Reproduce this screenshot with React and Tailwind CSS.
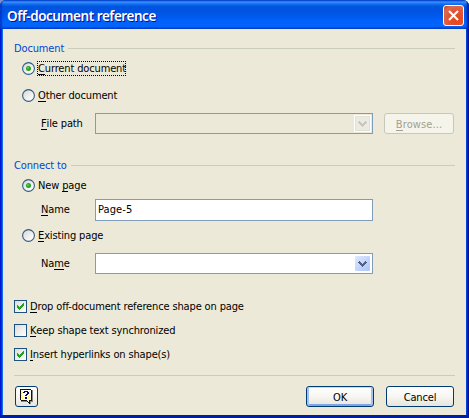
import React from "react";

function Section({ label, top }) {
  return (
    <div className={`flex h-[14px] items-center ${top}`}>
      <span className="mr-[4px] pt-px leading-[14px] text-[#0046d5]">{label}</span>
      <span className="h-px flex-1 bg-[#cacdb8]" />
    </div>
  );
}

function Key({ children }) {
  return <span className="inline-block h-[13px] border-b border-current leading-[14px]">{children}</span>;
}

function Text({ className = "", children }) {
  return <span className={`block pt-[2px] whitespace-nowrap ${className}`}>{children}</span>;
}

function Radio({ checked }) {
  return (
    <svg width="13" height="13" viewBox="0 0 13 13" className="shrink-0">
      <defs>
        <linearGradient id="radioFill" x1="0" y1="0" x2="1" y2="1">
          <stop offset="0.15" stopColor="#dcdcd7" />
          <stop offset="0.85" stopColor="#fff" />
        </linearGradient>
      </defs>
      <circle cx="6.5" cy="6.5" r="5.9" fill="url(#radioFill)" stroke="#2f5a88" strokeWidth="1.1" />
      {checked && <circle cx="6.5" cy="6.5" r="2.5" fill="#28a428" />}
      {checked && <circle cx="6" cy="6" r="1" fill="#55d551" />}
    </svg>
  );
}

function Check({ checked }) {
  return (
    <span className="flex size-[13px] shrink-0 border border-[#1c5180] bg-linear-to-br from-[#dcdcd7] to-white">
      {checked && (
        <svg width="11" height="11" shapeRendering="crispEdges">
          <path d="M2 4h1v1h1v1h1v-1h1v-1h1v-1h1v-1h1v3h-1v1h-1v1h-1v1h-1v1h-1v-1h-1v-1h-1z" fill="#21a121" />
        </svg>
      )}
    </span>
  );
}

function Arrow({ disabled }) {
  return (
    <span
      className={
        disabled
          ? "flex h-[17px] w-[17px] border border-white bg-[#ebeae3] outline-1 -outline-offset-2 outline-[#e2e1d8]"
          : "flex h-[17px] w-[17px] rounded-[2px] border border-white bg-linear-to-br from-[#dfe9ff] via-[#c5d5fc] to-[#afc6f8]"
      }
    >
      <svg width="15" height="15" shapeRendering="crispEdges">
        <path
          d="M4 5h1v1h-1zM10 5h1v1h-1zM3 6h3v1h-3zM9 6h3v1h-3zM4 7h3v1h-3zM8 7h3v1h-3zM5 8h5v1h-5zM6 9h3v1h-3zM7 10h1v1h-1z"
          fill={disabled ? "#c7c6bd" : "#4d6185"}
        />
      </svg>
    </span>
  );
}

function HelpIcon() {
  return (
    <svg width="15" height="17" viewBox="0 0 15 17" shapeRendering="crispEdges">
      <path d="M2 2h12v12h-2v2h-1v-1h-1v-1h-8z" fill="#8a8a80" />
      <path d="M1 1h11v1h1v11h-2v3h-1v-1h-1v-1h-1v-1h-6v-1h-1z" fill="#111" />
      <path d="M2 2h10v10h-2v2h-1v-1h-1v-1h-6z" fill="#fffff4" />
      <path d="M2 3h1v1h-1zM2 5h1v1h-1zM2 7h1v1h-1zM2 9h1v1h-1zM3 4h1v1h-1zM3 8h1v1h-1zM3 10h1v1h-1zM10 3h1v1h-1zM10 5h1v1h-1zM10 7h1v1h-1zM10 9h1v1h-1zM9 8h1v1h-1zM9 10h1v1h-1z" fill="#fff26b" />
      <path d="M5 3h4v1h-4zM4 4h2v1h-2zM8 4h2v2h-2zM7 6h2v1h-2zM6 7h2v1h-2zM6 9h2v2h-2z" fill="#000083" />
    </svg>
  );
}

const buttonBase =
  "flex h-[21px] items-center justify-center rounded-[3px] border leading-[19px]";
const activeButton =
  "border-[#003c74] bg-linear-to-b from-white via-[#f7f6f2] to-[#e7e5dc]";

export default function App() {
  return (
    <div className="h-[418px] w-[469px] overflow-hidden bg-[linear-gradient(90deg,#7890c8_0_50%,#fff_50%)]">
      <div className="flex h-full w-full flex-col overflow-hidden rounded-t-[6px] bg-[#0831d9] font-['DejaVu_Sans_Condensed','DejaVu_Sans',sans-serif] text-[11px] tracking-[-0.14px] text-black">
        <header className="flex h-[29px] shrink-0 items-center justify-between bg-[linear-gradient(180deg,#0855dd_0,#3e94ff_7%,#1777f5_12%,#0055df_22%,#0054e3_45%,#0061fa_72%,#0066ff_90%,#0047c9_100%)] pr-[5px] pl-[7px] shadow-[inset_2px_0_2px_#0039c9,inset_-2px_0_2px_#001da0]">
          <h1 className="pt-[2px] font-['Noto_Sans',sans-serif] text-[13.5px] leading-[18px] font-semibold tracking-[-0.45px] whitespace-nowrap text-white [text-shadow:1px_1px_0_#0f1089]">
            Off-document reference
          </h1>
          <button aria-label="Close" className="mt-[2px] flex size-[21px] items-center justify-center rounded-[3px] border border-white bg-[radial-gradient(circle_at_65%_70%,#e54517,#e25332_45%,#dc6b50_75%,#bd3b19)]">
            <svg width="13" height="13" viewBox="0 0 13 13">
              <path d="M2 2l9 9M11 2l-9 9" stroke="white" strokeWidth="2.1" />
            </svg>
          </button>
        </header>
        <div className="flex flex-1 border-b-[3px] border-b-[#001ea0]">
          <div className="flex w-[3px] shrink-0"><i className="w-px bg-[#0019cf]" /><i className="w-px bg-[#0831d9]" /><i className="w-px bg-[#166aee]" /></div>
          <main className="min-w-0 flex-1 bg-[#ece9d8] pr-[11px] pl-[11px]">
            <Section label="Document" top="mt-[12px]" />
            <div className="mt-[6px] ml-[8px] flex h-[15px] items-center">
              <Radio checked />
              <span className="ml-[2px] flex h-[15px] w-[89px] items-center border border-dotted border-black">
                <Text><Key>C</Key>urrent document</Text>
              </span>
            </div>
            <div className="mt-[12px] ml-[8px] flex h-[15px] items-center">
              <Radio />
              <Text className="ml-[3px]"><Key>O</Key>ther document</Text>
            </div>
            <div className="mt-[10px] flex h-[21px] items-center">
              <Text className="w-[81px] pl-[27px]"><Key>F</Key>ile path</Text>
              <div className="flex h-[21px] w-[278px] items-center justify-end border border-[#7f9db9] pr-[1px]"><Arrow disabled /></div>
              <button className={`${buttonBase} ml-[11px] w-[70px] border-[#c9c7ba] bg-[#f5f4ea] text-[#a1a192]`}><Text className="tracking-[0.1px]"><Key>B</Key>rowse...</Text></button>
            </div>
            <Section label="Connect to" top="mt-[24px]" />
            <div className="mt-[6px] ml-[8px] flex h-[15px] items-center">
              <Radio checked />
              <Text className="ml-[3px]">New <Key>p</Key>age</Text>
            </div>
            <div className="mt-[6px] flex h-[22px] items-center">
              <Text className="w-[81px] pb-[2px] pl-[27px]"><Key>N</Key>ame</Text>
              <div className="flex h-[22px] w-[278px] items-center border border-[#7f9db9] bg-white pl-[2px] tracking-[0.1px]">Page-5</div>
            </div>
            <div className="mt-[7px] ml-[8px] flex h-[15px] items-center">
              <Radio />
              <Text className="ml-[3px]"><Key>E</Key>xisting page</Text>
            </div>
            <div className="mt-[10px] flex h-[21px] items-center">
              <Text className="w-[81px] pl-[27px]">Na<Key>m</Key>e</Text>
              <div className="flex h-[21px] w-[278px] items-center justify-end border border-[#7f9db9] bg-white pr-[1px]"><Arrow /></div>
            </div>
            <div className="mt-[25px] flex flex-col gap-[9px]">
              <div className="flex h-[15px] items-center gap-[3px]"><Check checked /><Text><Key>D</Key>rop off-document reference shape on page</Text></div>
              <div className="flex h-[15px] items-center gap-[3px]"><Check /><Text><Key>K</Key>eep shape text synchronized</Text></div>
              <div className="flex h-[15px] items-center gap-[3px]"><Check checked /><Text><Key>I</Key>nsert hyperlinks on shape(s)</Text></div>
            </div>
            <div className="mt-[13px] h-px bg-[#cacdb8]" />
            <div className="mt-[10px] flex pr-px">
              <button aria-label="Help" className={`${buttonBase} ${activeButton} ml-[1px] w-[23px]`}><HelpIcon /></button>
              <button className={`${buttonBase} ${activeButton} ml-auto w-[68px] shadow-[inset_0_1px_0_#c7dafc,inset_2px_0_0_#a5c1ef,inset_-2px_0_0_#a5c1ef,inset_0_-2px_0_#7fa5e4]`}><Text>OK</Text></button>
              <button className={`${buttonBase} ${activeButton} ml-[12px] w-[68px]`}><Text>Cancel</Text></button>
            </div>
          </main>
          <div className="flex w-[3px] shrink-0"><i className="w-px bg-[#0040dc]" /><i className="w-px bg-[#0020b4]" /><i className="w-px bg-[#00138c]" /></div>
        </div>
      </div>
    </div>
  );
}
